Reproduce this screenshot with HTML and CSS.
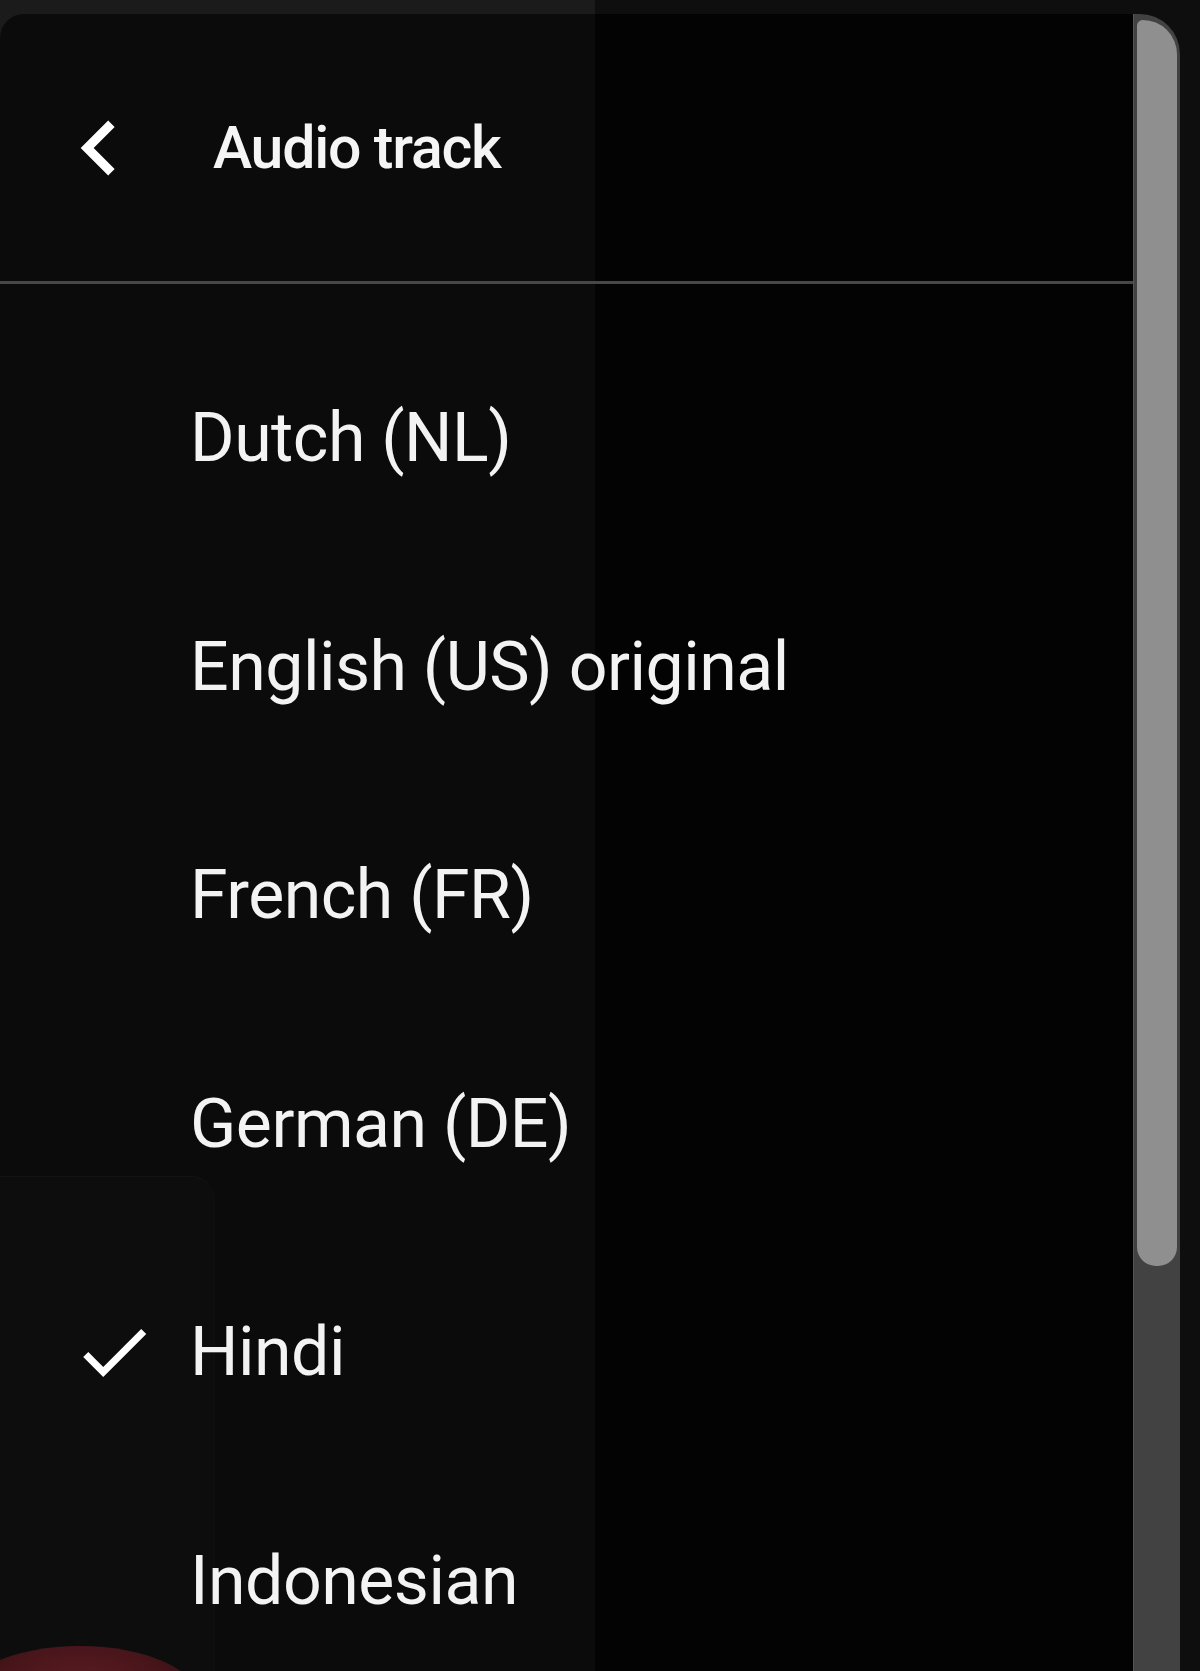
FILE: index.html
```html
<!DOCTYPE html>
<html lang="en">
<head>
<meta charset="utf-8">
<title>Audio track</title>
<link rel="stylesheet" href="styles.css">
</head>
<body>
<div class="screen">
  <div class="panel">
    <div class="content">
      <div class="header">
        <button class="back" aria-label="Back">
          <svg class="back-icon" viewBox="0 0 24 24" width="110" height="110">
            <path d="M15.41 7.41L14 6l-6 6 6 6 1.41-1.41L10.83 12z" fill="#ffffff"/>
          </svg>
        </button>
        <h1 class="title">Audio track</h1>
      </div>
      <ul class="list">
        <li class="item"><span class="check-slot"></span><span class="label">Dutch (NL)</span></li>
        <li class="item"><span class="check-slot"></span><span class="label">English (US) original</span></li>
        <li class="item"><span class="check-slot"></span><span class="label">French (FR)</span></li>
        <li class="item"><span class="check-slot"></span><span class="label">German (DE)</span></li>
        <li class="item selected"><span class="check-slot"><svg class="check" viewBox="0 0 24 24" width="86" height="86"><path d="M9 16.17L4.83 12l-1.42 1.41L9 19 21 7l-1.41-1.41z" fill="#ffffff"/></svg></span><span class="label">Hindi</span></li>
        <li class="item"><span class="check-slot"></span><span class="label">Indonesian</span></li>
      </ul>
    </div>
    <div class="track">
      <div class="thumb"></div>
    </div>
  </div>
</div>
</body>
</html>
```
FILE: styles.css
```css
* { box-sizing: border-box; }
html, body { margin: 0; padding: 0; }
body {
  width: 1200px;
  height: 1671px;
  overflow: hidden;
  background: linear-gradient(to right, #1b1b1b 0, #1b1b1b 595px, #0e0e0e 595px, #0e0e0e 100%);
  font-family: Roboto, "Noto Sans", "Liberation Sans", sans-serif;
  color: #ffffff;
}
.screen {
  width: 1200px;
  height: 1671px;
  padding-top: 14px;
}
.panel {
  position: relative;
  width: 1180px;
  height: 1657px;
  display: flex;
  border-radius: 24px 40px 0 0;
  overflow: hidden;
  background: linear-gradient(to right, #0b0b0b 0, #0b0b0b 595px, #030303 595px, #030303 100%);
}
/* faint video content seen through the translucent sheet */
.panel::before {
  content: "";
  position: absolute;
  left: 0;
  top: 1162px;
  width: 214px;
  height: 520px;
  border-radius: 0 24px 0 0;
  border-top: 1px solid #131313;
  border-right: 1px solid #101010;
  background: #0d0d0d;
}
.panel::after {
  content: "";
  position: absolute;
  left: -40px;
  top: 1632px;
  width: 240px;
  height: 110px;
  border-radius: 50%;
  background: radial-gradient(ellipse at 50% 40%, #5c1d22 0, #4a161b 45%, #341014 75%);
}
.content {
  position: relative;
  z-index: 2;
  flex: 1;
  display: flex;
  flex-direction: column;
}
.header {
  flex: 0 0 270px;
  height: 270px;
  display: flex;
  align-items: center;
  border-bottom: 3px solid #474747;
  padding-left: 44px;
}
.back {
  width: 110px;
  height: 110px;
  padding: 0;
  margin: 0;
  border: 0;
  background: none;
  display: flex;
  flex: 0 0 110px;
}
.back-icon { display: block; }
.title {
  margin: 0 0 0 59px;
  font-size: 59px;
  font-weight: 500;
  line-height: 1;
  letter-spacing: -1.2px;
  color: #f5f5f5;
}
.list {
  flex: 0 0 auto;
  list-style: none;
  margin: 0;
  padding: 40px 0 0 0;
}
.item {
  height: 228.5px;
  display: flex;
  align-items: center;
  padding-left: 71px;
}
.check-slot {
  width: 86px;
  height: 86px;
  flex: 0 0 86px;
  display: flex;
}
.check { display: block; }
.label {
  margin-left: 33px;
  font-size: 68px;
  line-height: 1;
  font-weight: 400;
  letter-spacing: -0.5px;
  color: #f3f3f3;
  white-space: nowrap;
}
.track {
  position: relative;
  z-index: 2;
  width: 47px;
  flex: 0 0 47px;
  background: #424242;
  border-left: 1px solid #545454;
  padding: 6px 3px 0 3px;
}
.thumb {
  height: 1246px;
  background: #8f8f8f;
  border-radius: 6px 36px 20px 20px;
}
```
